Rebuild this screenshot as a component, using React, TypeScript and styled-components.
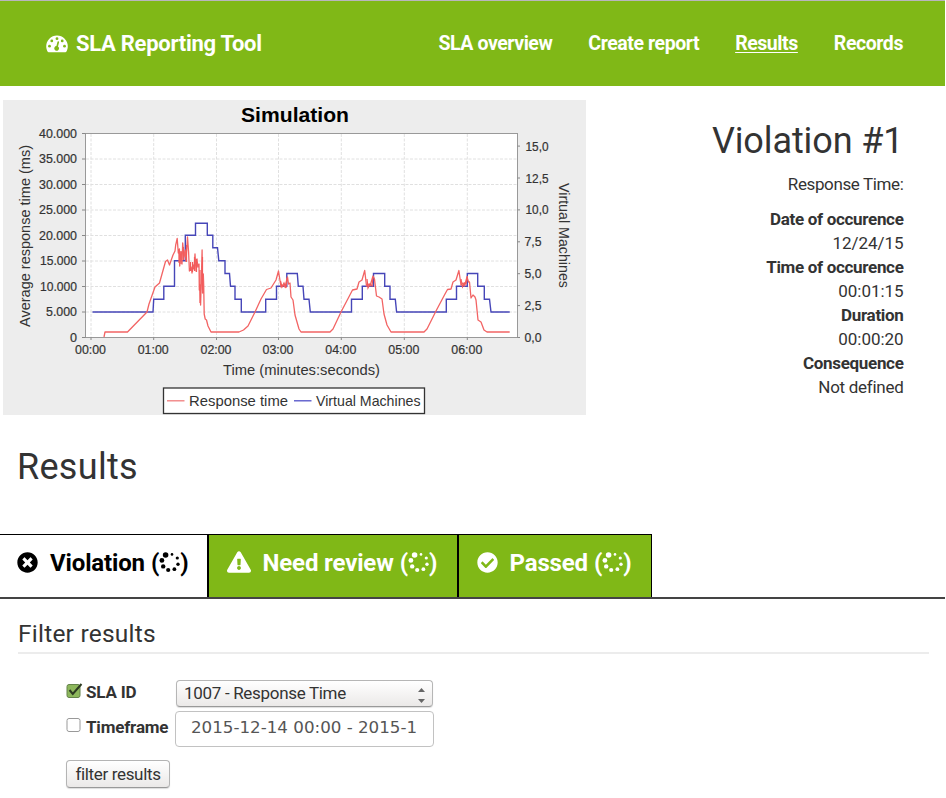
import React from 'react';
import styled, { createGlobalStyle } from 'styled-components';
import { FaTimesCircle, FaExclamationTriangle, FaCheckCircle } from 'react-icons/fa';

const GREEN = '#80b817';

const GlobalStyle = createGlobalStyle`
  * { box-sizing: border-box; }
  body { margin: 0; background: #fff; overflow: hidden; }
  h1, h2, h3, p, dl, dt, dd { margin: 0; }
`;

const Page = styled.div`
  width: 945px;
  height: 798px;
  font: 16px/24px Roboto, sans-serif;
  color: #333;
`;

const Header = styled.header`
  display: flex;
  justify-content: space-between;
  height: 86px;
  padding: 31px 42px 0 46px;
  border-top: 1px solid #b9b5bd;
  background: ${GREEN};
  color: #fff;
`;

const Brand = styled.div`
  display: flex;
  align-items: center;
  gap: 8px;
  height: 24px;
  font-size: 22px;
  font-weight: 700;
  letter-spacing: -0.28px;
  white-space: nowrap;
  svg { flex: none; margin-top: -1px; }
`;

const Nav = styled.nav`
  display: flex;
  gap: 36px;
`;

const NavLink = styled.a<{ $active?: boolean }>`
  font-size: 19.5px;
  font-weight: 700;
  line-height: 24px;
  letter-spacing: -0.43px;
  white-space: nowrap;
  text-decoration: ${(p) => (p.$active ? 'underline' : 'none')};
  text-decoration-thickness: 1px;
  text-underline-offset: 2px;
`;

const Overview = styled.section`
  display: flex;
  justify-content: space-between;
  height: 329px;
  padding: 14px 41.5px 0 3px;
`;

const Chart = styled.svg`
  display: block;
  flex: none;
  background: #ededed;
`;

const Summary = styled.aside`
  padding-top: 20px;
  text-align: right;
  white-space: nowrap;
`;

const SummaryTitle = styled.h1`
  font-size: 36px;
  line-height: 42px;
  font-weight: 400;
  letter-spacing: -0.1px;
`;

const SummaryName = styled.p`
  margin-top: 10px;
  line-height: 24px;
  font-size: 17px;
  letter-spacing: -0.37px;
`;

const Facts = styled.dl`
  margin-top: 11px;
  font-size: 17px;
  line-height: 24px;
  dt { font-weight: 700; letter-spacing: -0.32px; }
`;

const Fact = styled.dd<{ $text: boolean }>`
  letter-spacing: ${(p) => (p.$text ? -0.28 : -0.05)}px;
`;

const PageTitle = styled.h2`
  height: 119px;
  padding: 31px 0 0 17px;
  font-size: 36px;
  line-height: 42px;
  font-weight: 400;
  letter-spacing: 0.3px;
`;

const Tabs = styled.div`
  display: flex;
  height: 65px;
  border-bottom: 2px solid #444;
`;

const Tab = styled.button<{ $width: number; $active?: boolean }>`
  display: flex;
  width: ${(p) => p.$width}px;
  height: 63px;
  padding: 16px 0 0 ${(p) => (p.$active ? 17 : 17.5)}px;
  border: solid #000;
  border-width: 1px 1px 0 ${(p) => (p.$active ? 0 : 1)}px;
  background: ${(p) => (p.$active ? '#fff' : GREEN)};
  color: ${(p) => (p.$active ? '#000' : '#fff')};
  font: 700 24px/24px Roboto, sans-serif;
  letter-spacing: -0.15px;
  white-space: nowrap;
`;

const TabIcon = styled.span`
  display: flex;
  align-items: center;
  height: 22px;
  margin-right: 12px;
`;

const Count = styled.span`
  display: flex;
  margin-left: 6px;
  svg { margin: 0; }
`;

const Panel = styled.section`
  padding: 20px 16px 0 18px;
`;

const PanelTitle = styled.h3`
  height: 35px;
  border-bottom: 2px solid #ececec;
  font-size: 24.5px;
  line-height: 30px;
  font-weight: 400;
  letter-spacing: 0.23px;
`;

const Form = styled.form`
  padding: 26px 0 0 48px;
`;

const Field = styled.div<{ $height: number }>`
  display: grid;
  grid-template-columns: 16px 93px auto;
  justify-content: start;
  height: ${(p) => p.$height}px;
`;

const Label = styled.label<{ $top: number }>`
  padding: ${(p) => p.$top}px 0 0 4px;
  font-size: 17px;
  font-weight: 700;
  line-height: 24px;
  letter-spacing: -0.18px;
  white-space: nowrap;
`;

const CheckBox = styled.svg`
  display: block;
  overflow: visible;
`;

const SelectBox = styled.div`
  display: flex;
  justify-content: space-between;
  width: 257px;
  height: 27px;
  margin-left: 1px;
  padding: 0 7px;
  border: 1px solid #b6b6b6;
  border-bottom-color: #999;
  border-radius: 4px;
  background: linear-gradient(#fff, #ebe9e8);
  box-shadow: 0 1px 1px #ddd;
  font-size: 17px;
  line-height: 24px;
  letter-spacing: -0.31px;
`;

const TextBox = styled.div`
  width: 259px;
  height: 36px;
  padding: 0 15px;
  border: 1px solid #c2c2c2;
  border-radius: 4px;
  overflow: hidden;
  white-space: nowrap;
  color: #555;
  font: 16.7px/31px 'DejaVu Sans', sans-serif;
`;

const Submit = styled.button`
  display: block;
  width: 104px;
  height: 28px;
  margin: 13px 0 0;
  padding: 0;
  border: 1px solid #b4b4b4;
  border-bottom-color: #999;
  border-radius: 4px;
  background: linear-gradient(#fff, #ebe9e8);
  box-shadow: 0 1px 1px #ddd;
  color: #333;
  font: 17px/25px Roboto, sans-serif;
  letter-spacing: -0.34px;
`;

const Gauge = () => (
  <svg width="22" height="18" viewBox="0 0 22 18">
    <path fill="#fff" d="M11 .5A10.8 10.8 0 0 0 .2 11.3c0 2 .5 3.8 1.5 5.5.2.3.5.4.8.4h17c.3 0 .6-.1.8-.4 1-1.7 1.5-3.5 1.5-5.5A10.8 10.8 0 0 0 11 .5z" />
    <g fill={GREEN}>
      <circle cx="3.5" cy="11.2" r="1.4" />
      <circle cx="5.8" cy="5.9" r="1.4" />
      <circle cx="11" cy="3.7" r="1.4" />
      <circle cx="16.2" cy="5.9" r="1.4" />
      <circle cx="18.5" cy="11.2" r="1.4" />
      <path d="M12.3 6.2q.9.1.8 1l-1.1 4.2a2.4 2.4 0 1 1-1.6-.4l1.1-4.2q.2-.6.8-.6z" />
    </g>
  </svg>
);

const spinnerDots = [
  [6.6, 4, 2.8], [2.9, 9.4, 2.4], [4.2, 15.4, 2.2], [9.2, 19, 2.1],
  [15.4, 18.2, 1.9], [19, 13.2, 1.7], [18.3, 7, 1.6], [13, 3.4, 1.3],
];

const Spinner = () => (
  <svg width="21" height="22" viewBox="0 0 21 22" fill="currentColor">
    {spinnerDots.map(([x, y, r]) => <circle key={x} cx={x} cy={y} r={r} />)}
  </svg>
);

const leftTicks = ['0', '5.000', '10.000', '15.000', '20.000', '25.000', '30.000', '35.000', '40.000'];
const leftWidths = [7, 31, 37, 37, 38, 38, 38, 38, 38];
const rightTicks = ['0,0', '2,5', '5,0', '7,5', '10,0', '12,5', '15,0'];
const timeTicks = [91, 153.7, 216.5, 278.5, 341.3, 404.3, 467.3];

const machines = `M92.5 312H153L153.7 299.2H163.8V286.3H174.5V260.8H185.3V235.2H195.5V223.2H207.3V235.2
  H212.8V247.7H217.5L218.8 260.8H225V273.5H229.5L230.5 286.3H235V299.2H241.3V312H265.7V299.2H276.5V286.3H286.8V273.5
  H297.3L298.3 286.3H303L304 299.2H309L310.3 312H351.5V299.2H362.3V286.3H373.5V273.5H384.7V286.3H390V299.2H395.3L396.6 312
  H446.3V299.2H456.5V286.3H467.3V273.5H477.7V286.3H484.3V299.2H489.5L491 312H509.7`;

const response = `M104 337L105 332H127.5L147 312L149 304L155 287L159.5 283L165.5 261.5L167.5 260L169.5 265L173 255
  L175 251L175.7 245L177.2 238.5L178.3 253L179.4 249L179.7 266L181 252L182 264L182.7 243L184 257L185.2 250L186 261L187.5 237
  L188.6 252L189.4 271L191.2 267L192 273L193 265L194 269L195 254L196 271L197 259L197.8 267L199 264L199.3 290L200 285L200.6 305
  L201.5 273L202.1 250L202.6 293L203.3 274L203.7 285L204.2 314L205.2 319L206.5 320L208 326L211 332H239L243.5 330L248 326L255 312
  L261 299L266.5 289.5L271 288L276 280L278.5 271L281 287L283 285L285 287L287.5 277L288.5 284L290 283L291 297L293 300L295 315
  L299 329L301 332H330L333 329L341 312L352.5 290L357 289L359 282L362 280L364.7 270.5L366.5 286L369 284L370 286L373 276
  L374.5 279L376.5 296L379 297L382 299L384 314L387 325L391 332H424L427 329L436 311L445 294L447.5 289.5L451 289L453 282L456 280
  L458.9 270.5L461 285L463 283L464.5 286L467 277L468.5 282L469.5 282L471 298L473 295L475 297L476 300L478 320L481 322L484 330L487 332H509.7`;

const noisyPeaks = `M179 250V263M181 251V264M183.5 247V260M186.5 245V262M190.5 262V271M192.5 262V272M194.5 257V271M196.5 259V272
  M200 270V303M202.5 257V290M280.5 281L282 287L284 283L286 288L287 278M367 279L368 288L370 284L372 286L373 277
  M461 279L462.5 287L464.5 283L466 284L467.5 276`;

const SimulationChart = () => (
  <Chart width="583" height="315" viewBox="3 100 583 315" fontFamily="'Liberation Sans', Arial, sans-serif" fontSize="12" fill="#333">
    <text x="241" y="122.3" fontSize="20.5" fontWeight="700" fill="#000" textLength="108" lengthAdjust="spacingAndGlyphs">Simulation</text>
    <rect x="85.5" y="133.5" width="432" height="204" fill="#fff" stroke="#999" />
    <g stroke="#e0e0e0" strokeDasharray="3 1.5">
      {leftTicks.slice(1, 8).map((t, i) => <path key={t} d={`M86 ${312 - i * 25.5}H517`} />)}
      {timeTicks.map((x) => <path key={x} d={`M${x} 134V337`} />)}
    </g>
    <g stroke="#888">
      {leftTicks.map((t, i) => <path key={t} d={`M82 ${337.5 - i * 25.5}H85.5`} />)}
      {rightTicks.map((t, i) => <path key={t} d={`M517.5 ${337.5 - i * 31.9}H520`} />)}
      {timeTicks.map((x) => <path key={x} d={`M${x} 337.5V340`} />)}
    </g>
    <g stroke="#333" strokeWidth="0.2">
      {leftTicks.map((t, i) => (
        <text key={t} x={77 - leftWidths[i]} y={341.9 - i * 25.5} textLength={leftWidths[i]} lengthAdjust="spacingAndGlyphs">{t}</text>
      ))}
      {rightTicks.map((t, i) => (
        <text key={t} x={i < 4 ? 524.5 : 525.5} y={342 - i * 31.9} textLength={i < 4 ? 17 : 23} lengthAdjust="spacingAndGlyphs">{t}</text>
      ))}
      {timeTicks.map((x, i) => (
        <text key={x} x={x - 16} y="353.7" textLength="31" lengthAdjust="spacingAndGlyphs">{`0${i}:00`}</text>
      ))}
    </g>
    <g fontSize="14.3">
      <text transform="translate(30 327) rotate(-90)" textLength="182" lengthAdjust="spacingAndGlyphs">Average response time (ms)</text>
      <text transform="translate(559 183) rotate(90)" textLength="105" lengthAdjust="spacingAndGlyphs">Virtual Machines</text>
      <text x="223" y="374.5" textLength="157" lengthAdjust="spacingAndGlyphs">Time (minutes:seconds)</text>
      <rect x="163.5" y="388" width="261" height="25.5" fill="#fff" stroke="#333" strokeWidth="1.3" />
      <text x="189" y="406" textLength="99" lengthAdjust="spacingAndGlyphs">Response time</text>
      <text x="316" y="406" textLength="104.5" lengthAdjust="spacingAndGlyphs">Virtual Machines</text>
    </g>
    <path d="M167 400.8H184.5" stroke="#f07c7c" strokeWidth="1.3" />
    <path d="M294 400.8H311.5" stroke="#5050c8" strokeWidth="1.3" />
    <path d={machines} fill="none" stroke="#4646b8" strokeWidth="1.4" />
    <path d={response} fill="none" stroke="#f26464" strokeWidth="1.3" strokeLinejoin="round" />
    <path d={noisyPeaks} fill="none" stroke="#f25a5a" strokeWidth="1.2" />
  </Chart>
);

const facts = [
  ['Date of occurence', '12/24/15'],
  ['Time of occurence', '00:01:15'],
  ['Duration', '00:00:20'],
  ['Consequence', 'Not defined'],
];

export default function App() {
  return (
    <Page>
      <GlobalStyle />
      <Header>
        <Brand><Gauge /><span>SLA Reporting Tool</span></Brand>
        <Nav>
          <NavLink>SLA overview</NavLink>
          <NavLink>Create report</NavLink>
          <NavLink $active>Results</NavLink>
          <NavLink>Records</NavLink>
        </Nav>
      </Header>
      <Overview>
        <SimulationChart />
        <Summary>
          <SummaryTitle>Violation #1</SummaryTitle>
          <SummaryName>Response Time:</SummaryName>
          <Facts>
            {facts.map(([name, value]) => (
              <React.Fragment key={name}>
                <dt>{name}</dt>
                <Fact $text={/[a-z]/.test(value)}>{value}</Fact>
              </React.Fragment>
            ))}
          </Facts>
        </Summary>
      </Overview>
      <PageTitle>Results</PageTitle>
      <Tabs>
        <Tab $width={208} $active>
          <TabIcon><FaTimesCircle size={21} /></TabIcon>Violation<Count>(<Spinner />)</Count>
        </Tab>
        <Tab $width={250}>
          <TabIcon><FaExclamationTriangle size={24} /></TabIcon>Need review<Count>(<Spinner />)</Count>
        </Tab>
        <Tab $width={194}>
          <TabIcon><FaCheckCircle size={21} /></TabIcon>Passed<Count>(<Spinner />)</Count>
        </Tab>
      </Tabs>
      <Panel>
        <PanelTitle>Filter results</PanelTitle>
        <Form>
          <Field $height={31}>
            <CheckBox width="16" height="20" viewBox="0 0 16 20">
              <rect x="1" y="4.5" width="13" height="13" rx="2" fill="#8db75c" stroke="#64834a" />
              <path d="M3.5 10l3.3 4L15.5 4" fill="none" stroke="#2d3a22" strokeWidth="2" />
            </CheckBox>
            <Label $top={0}>SLA ID</Label>
            <SelectBox>
              <span>1007 - Response Time</span>
              <svg width="7" height="25" viewBox="0 0 7 25" fill="#666"><path d="M0 11l3.5-4L7 11zM0 18h7l-3.5 4z" /></svg>
            </SelectBox>
          </Field>
          <Field $height={36}>
            <CheckBox width="16" height="20" viewBox="0 0 16 20">
              <rect x="1" y="7.5" width="13" height="13" rx="2" fill="#fff" stroke="#999" />
            </CheckBox>
            <Label $top={4}>Timeframe</Label>
            <TextBox>2015-12-14 00:00 - 2015-1</TextBox>
          </Field>
          <Submit type="button">filter results</Submit>
        </Form>
      </Panel>
    </Page>
  );
}
